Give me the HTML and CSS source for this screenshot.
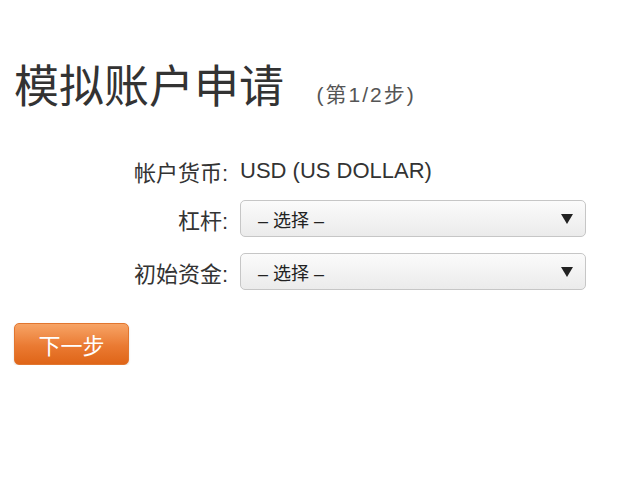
FILE: index.html
```html
<!DOCTYPE html>
<html lang="zh-CN">
<head>
  <meta charset="UTF-8" />
  <title>模拟账户申请</title>
  <link rel="stylesheet" href="styles.css">
</head>
<body>
  <div class="page">
    <h1>模拟账户申请 <span class="step">(第1/2步)</span></h1>

    <div class="form">
      <div class="row">
        <label>帐户货币:</label>
        <div class="value">USD (US DOLLAR)</div>
      </div>
      <div class="row">
        <label>杠杆:</label>
        <div class="select">
          <span>– 选择 –</span>
          <svg class="arrow" width="12" height="10" viewBox="0 0 12 10"><path d="M0 0h12L6 10z" fill="#222"/></svg>
        </div>
      </div>
      <div class="row">
        <label>初始资金:</label>
        <div class="select">
          <span>– 选择 –</span>
          <svg class="arrow" width="12" height="10" viewBox="0 0 12 10"><path d="M0 0h12L6 10z" fill="#222"/></svg>
        </div>
      </div>
    </div>

    <button class="next-btn">下一步</button>
  </div>
</body>
</html>
```

FILE: styles.css
```css
* {
  box-sizing: border-box;
}

body {
  margin: 0;
  font-family: "Liberation Sans", "Noto Sans CJK SC", sans-serif;
  color: #333;
  background: #fff;
}

.page {
  padding: 60px 14px 0;
}

h1 {
  margin: 0;
  font-size: 45px;
  font-weight: normal;
  line-height: 56px;
  color: #333;
}

.step {
  margin-left: 20px;
  font-size: 21px;
  letter-spacing: 2px;
  color: #555;
  vertical-align: 1px;
}

.form {
  margin-top: 33px;
}

.row {
  display: flex;
  align-items: center;
  height: 53px;
}

.row:first-child {
  height: 29px;
  margin: 0 0 7px;
}

label {
  width: 226px;
  text-align: right;
  padding-right: 12px;
  font-size: 22px;
  color: #333;
}

.value {
  font-size: 22px;
  color: #333;
}

.select {
  width: 346px;
  height: 37px;
  display: flex;
  align-items: center;
  justify-content: space-between;
  padding: 0 12px 0 17px;
  border: 1px solid #c6c6c6;
  border-radius: 5px;
  background: linear-gradient(#fbfbfb, #ebebeb);
  font-size: 18px;
  color: #222;
}

.next-btn {
  margin-top: 25px;
  width: 115px;
  height: 42px;
  border: 1px solid #e2762f;
  border-radius: 5px;
  background: linear-gradient(#f7a466, #ea7a32 55%, #df6518);
  color: #fff;
  font-family: "Liberation Sans", "Noto Sans CJK SC", sans-serif;
  font-size: 22px;
  box-shadow: 0 1px 2px rgba(0, 0, 0, 0.15);
  cursor: pointer;
}
```
